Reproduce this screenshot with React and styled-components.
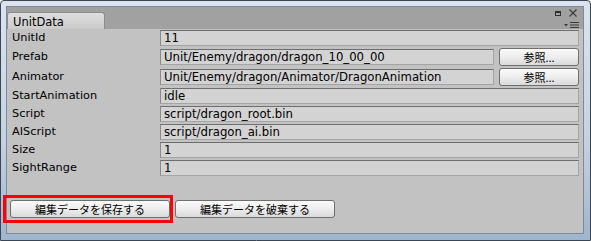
import styled, { createGlobalStyle } from 'styled-components';

const GlobalStyle = createGlobalStyle`
  html, body {
    margin: 0;
    padding: 0;
    background: #ffffff;
  }
  * {
    box-sizing: border-box;
  }
`;

const fields = [
  { label: 'UnitId', value: '11' },
  { label: 'Prefab', value: 'Unit/Enemy/dragon/dragon_10_00_00', browse: true },
  { label: 'Animator', value: 'Unit/Enemy/dragon/Animator/DragonAnimation', browse: true },
  { label: 'StartAnimation', value: 'idle' },
  { label: 'Script', value: 'script/dragon_root.bin' },
  { label: 'AIScript', value: 'script/dragon_ai.bin' },
  { label: 'Size', value: '1' },
  { label: 'SightRange', value: '1' },
];

const App = () => {
  return (
    <>
      <GlobalStyle />
      <Window>
        <Panel>
          <TabBar>
            <Tab>UnitData</Tab>
            <WindowIcons>
              <TopIcons>
                <MaxIcon />
                <svg width="8" height="8" viewBox="0 0 8 8">
                  <path d="M0.5 0.5 L7.5 7.5 M7.5 0.5 L0.5 7.5" stroke="#3a3a3a" strokeWidth="1.1" />
                </svg>
              </TopIcons>
              <svg width="15" height="6" viewBox="0 0 15 6">
                <path d="M0 2 L4 2 L2 4.5 Z" fill="#3a3a3a" />
                <path d="M6 0.5 H15 M6 3 H15 M6 5.5 H15" stroke="#3a3a3a" strokeWidth="1" />
              </svg>
            </WindowIcons>
          </TabBar>
          <Content>
            <Rows>
              {fields.map((f) => (
                <Row key={f.label} $tall={f.browse}>
                  <Label>{f.label}</Label>
                  <Field>{f.value}</Field>
                  {f.browse && <BrowseButton>参照...</BrowseButton>}
                </Row>
              ))}
            </Rows>
            <Actions>
              <Highlight>
                <ActionButton>編集データを保存する</ActionButton>
              </Highlight>
              <ActionButton>編集データを破棄する</ActionButton>
            </Actions>
          </Content>
        </Panel>
      </Window>
    </>
  );
};

export default App;

const Window = styled.div`
  width: 591px;
  height: 241px;
  border: 1px solid #3c4652;
  border-radius: 4px 4px 0 0;
  padding: 5px 6px 6px 5px;
  background: linear-gradient(180deg, #dbe4ee 0%, #c3d1e0 60%, #9fb5cd 100%);
  display: flex;
`;

const Panel = styled.div`
  flex: 1;
  display: flex;
  flex-direction: column;
  border: 1px solid #7d8a99;
  background: #c2c2c2;
  font-family: "DejaVu Sans", Verdana, sans-serif;
  font-size: 11.3px;
  color: #000;
`;

const TabBar = styled.div`
  height: 22px;
  background: #a1a1a1;
  display: flex;
  align-items: flex-end;
  justify-content: space-between;
`;

const Tab = styled.div`
  width: 98px;
  height: 17px;
  padding: 2px 0 0 5px;
  background: linear-gradient(180deg, #dedede 0%, #cbcbcb 100%);
  border: 1px solid #8c8c8c;
  border-bottom: none;
  border-radius: 3px 3px 0 0;
  font-size: 11.5px;
  line-height: 14px;
`;

const WindowIcons = styled.div`
  display: flex;
  flex-direction: column;
  align-items: flex-end;
  gap: 5px;
  padding: 0 4px 1px 0;
  align-self: stretch;
  justify-content: flex-end;
`;

const TopIcons = styled.div`
  display: flex;
  align-items: center;
  gap: 8px;
  padding-right: 2px;
`;

const MaxIcon = styled.div`
  width: 6px;
  height: 5px;
  border: 1px solid #2f2f2f;
  border-top-width: 2px;
`;

const Content = styled.div`
  flex: 1;
  display: flex;
  flex-direction: column;
  padding: 1px 4px 0 5px;
`;

const Rows = styled.div`
  display: flex;
  flex-direction: column;
  gap: 2px;
`;

const Row = styled.div`
  display: flex;
  align-items: center;
  gap: 5px;
  height: ${(p) => (p.$tall ? '18px' : '16px')};
`;

const Label = styled.div`
  width: 143px;
  flex: none;
  line-height: 14px;
`;

const Field = styled.div`
  flex: 1;
  height: 16px;
  padding: 0 0 0 3px;
  font-size: 11.7px;
  line-height: 14px;
  background: #d3d3d3;
  border: 1px solid #a4a4a4;
  border-top-color: #6e6e6e;
  border-left-color: #8a8a8a;
  white-space: nowrap;
  overflow: hidden;
`;

const ButtonBase = styled.button`
  font-family: "Noto Sans CJK JP", "DejaVu Sans", sans-serif;
  font-size: 11px;
  color: #000;
  background: linear-gradient(180deg, #fbfbfb 0%, #ededed 50%, #dadada 100%);
  border: 1px solid #6f6f6f;
  border-radius: 3px;
  padding: 0;
  display: flex;
  align-items: center;
  justify-content: center;
  line-height: 1;
`;

const BrowseButton = styled(ButtonBase)`
  width: 80px;
  height: 18px;
  flex: none;
`;

const Actions = styled.div`
  display: flex;
  align-items: center;
  gap: 2px;
  margin: 19px 0 0 -9px;
`;

const Highlight = styled.div`
  border: 3px solid #ff0000;
  padding: 2px 0 2px 4px;
`;

const ActionButton = styled(ButtonBase)`
  width: 160px;
  height: 18px;
`;
